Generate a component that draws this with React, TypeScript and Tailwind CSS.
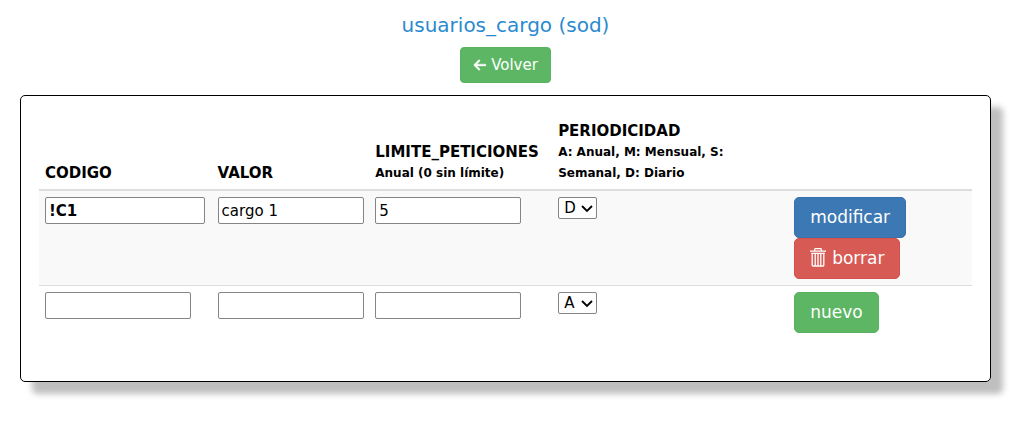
import type { ReactNode } from "react";
import clsx from "clsx";
import { FaArrowLeft } from "react-icons/fa6";

const periods = ["A", "M", "S", "D"];

const cargos = [
  { codigo: "!C1", valor: "cargo 1", limite: "5", periodo: "D", isNew: false },
  { codigo: "", valor: "", limite: "", periodo: "A", isNew: true },
];

function TrashIcon() {
  return (
    <svg
      viewBox="0 0 16 22"
      className="h-[22px] w-4"
      fill="none"
      stroke="currentColor"
      strokeWidth="1.3"
      aria-hidden="true"
    >
      <path d="M0 3.2h16M4.7 3V1.4q0-.7.7-.7h5.2q.7 0 .7.7V3" />
      <path d="M1.2 5.4h13.6M2.2 5.4v11.8q0 .8.8.8h10q.8 0 .8-.8V5.4" />
      <path d="M5.2 5.5v12.3M8 5.5v12.3M10.8 5.5v12.3" />
    </svg>
  );
}

function TextField({ label, value, wide = false, bold = false }: {
  label: string;
  value: string;
  wide?: boolean;
  bold?: boolean;
}) {
  return (
    <input
      type="text"
      aria-label={label}
      defaultValue={value}
      className={clsx(
        "block h-[27px] rounded-[2px] border border-[#858585] bg-white px-[3px] text-[15px] text-black",
        wide ? "w-40" : "w-[146px]",
        bold && "font-bold"
      )}
    />
  );
}

function PeriodSelect({ value }: { value: string }) {
  return (
    <div className="relative w-[39px]">
      <select
        aria-label="Periodicidad"
        defaultValue={value}
        className="block h-[22px] w-full appearance-none rounded-[2px] border border-[#858585] bg-white pl-[5px] text-[15px] leading-5 text-black"
      >
        {periods.map((p) => (
          <option key={p}>{p}</option>
        ))}
      </select>
      <svg
        viewBox="0 0 12 8"
        className="pointer-events-none absolute top-2 right-1 h-2 w-3"
        fill="none"
        stroke="black"
        strokeWidth="1.8"
        aria-hidden="true"
      >
        <path d="M1 1L6 6L11 1" />
      </svg>
    </div>
  );
}

function ActionButton({ className, children }: { className: string; children: ReactNode }) {
  return (
    <button
      type="button"
      className={clsx(
        "flex h-[41px] items-center gap-[6px] rounded-[5px] border px-[15px] text-[17px] text-white",
        className
      )}
    >
      {children}
    </button>
  );
}

export default function App() {
  return (
    <main className="bg-white pt-3 pr-[33px] pb-10 pl-5 font-['Verdana','DejaVu_Sans',sans-serif] text-[15px] text-black">
      <header className="flex flex-col items-center gap-2 pb-3">
        <h1 className="text-xl leading-[27px] text-[#2a8ad0]">usuarios_cargo (sod)</h1>
        <a
          href="#volver"
          className="flex h-9 items-center gap-1 rounded-[4px] border border-[#58b25f] bg-[#5cb663] px-3 text-[15px] text-white"
        >
          <FaArrowLeft className="size-[14px]" stroke="currentColor" strokeWidth="16" />
          Volver
        </a>
      </header>

      <section className="rounded-[5px] border border-black px-[18px] pt-[18px] pb-[42px] shadow-[12px_12px_6px_#bfbfbf]">
        <table className="w-full table-fixed border-separate border-spacing-0 text-left">
          <colgroup>
            <col className="w-[18.5%]" />
            <col className="w-[16.9%]" />
            <col className="w-[19.6%]" />
            <col className="w-[25.3%]" />
            <col />
          </colgroup>
          <thead>
            <tr className="align-bottom leading-[21px] *:border-b-2 *:border-[#ddd] *:px-[6px] *:pt-[7px] *:pb-[5px]">
              <th>CODIGO</th>
              <th>VALOR</th>
              <th className="whitespace-nowrap">
                LIMITE_PETICIONES
                <small className="block text-xs leading-[21px]">Anual (0 sin límite)</small>
              </th>
              <th>
                PERIODICIDAD
                <small className="block max-w-[180px] text-xs leading-[21px]">
                  A: Anual, M: Mensual, S: Semanal, D: Diario
                </small>
              </th>
              <th aria-label="Acciones" />
            </tr>
          </thead>
          <tbody>
            {cargos.map((c) => (
              <tr
                key={c.codigo}
                className={clsx(
                  "align-top *:p-[6px]",
                  !c.isNew && "bg-[#f9f9f9] *:border-b *:border-[#ddd]"
                )}
              >
                <td>
                  <TextField label="Código" value={c.codigo} wide={!c.isNew} bold />
                </td>
                <td>
                  <TextField label="Valor" value={c.valor} />
                </td>
                <td>
                  <TextField label="Límite de peticiones" value={c.limite} />
                </td>
                <td>
                  <PeriodSelect value={c.periodo} />
                </td>
                <td>
                  {c.isNew ? (
                    <ActionButton className="border-[#58b25f] bg-[#5cb663]">nuevo</ActionButton>
                  ) : (
                    <>
                      <ActionButton className="border-[#3872ac] bg-[#3c78b4]">modificar</ActionButton>
                      <ActionButton className="border-[#d5524c] bg-[#d75a54]">
                        <TrashIcon />
                        borrar
                      </ActionButton>
                    </>
                  )}
                </td>
              </tr>
            ))}
          </tbody>
        </table>
      </section>
    </main>
  );
}
